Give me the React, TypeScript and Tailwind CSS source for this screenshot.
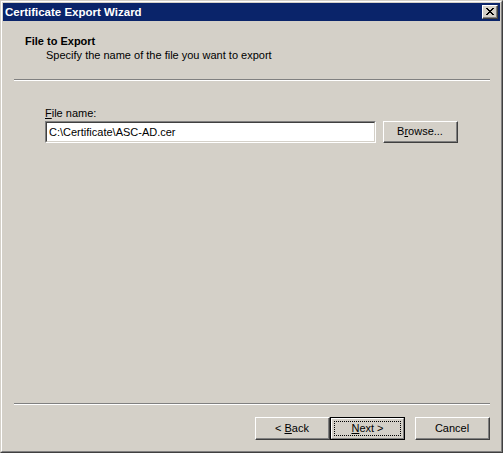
const raised =
  "border border-t-white border-l-white border-r-[#404040] border-b-[#404040]";

const Button = ({
  children,
  isDefault,
}: {
  children: React.ReactNode;
  isDefault?: boolean;
}) => {
  if (isDefault) {
    return (
      <div className="h-[23px] w-[75px] border border-black">
        <div className="h-full w-full border border-t-white border-l-white border-r-[#808080] border-b-[#808080] p-[2px]">
          <div className="flex h-full w-full items-center justify-center border border-dotted border-black pb-[1px]">
            {children}
          </div>
        </div>
      </div>
    );
  }
  return (
    <div className={`h-[23px] w-[75px] ${raised}`}>
      <div className="flex h-full w-full items-center justify-center border-r border-b border-r-[#808080] border-b-[#808080] pb-[1px]">
        {children}
      </div>
    </div>
  );
};

const Separator = () => (
  <div className="ml-[11px] mr-[10px] border-t border-b border-t-[#808080] border-b-white" />
);

// 8x7 pixel close glyph, same as the classic caption button
const closeRows = ["XX....XX", ".XX..XX.", "..XXXX..", "...XX...", "..XXXX..", ".XX..XX.", "XX....XX"];

export default function App() {
  return (
    <div
      className="h-[453px] w-[503px] bg-[#d4d0c8] text-[11px] leading-[14px] text-black"
      style={{ fontFamily: '"Liberation Sans", Arial, sans-serif' }}
    >
      {/* window frame */}
      <div className="h-full w-full border border-t-[#d4d0c8] border-l-[#d4d0c8] border-r-[#404040] border-b-[#404040]">
        <div className="flex h-full w-full flex-col border border-t-white border-l-white border-r-[#808080] border-b-[#808080] p-[1px]">
          {/* title bar */}
          <div className="flex h-[18px] items-center justify-between bg-[#0a246a] pl-[2px] pr-[2px]">
            <span className="text-[11.5px] font-bold text-white">Certificate Export Wizard</span>
            <div className={`h-[14px] w-[16px] bg-[#d4d0c8] ${raised}`}>
              <div className="flex h-full w-full items-center justify-center border-r border-b border-r-[#808080] border-b-[#808080]">
                <svg width="8" height="7" viewBox="0 0 8 7" shapeRendering="crispEdges">
                  {closeRows.map((row, y) =>
                    row.split("").map((c, x) =>
                      c === "X" ? <rect key={`${x}-${y}`} x={x} y={y} width="1" height="1" fill="black" /> : null
                    )
                  )}
                </svg>
              </div>
            </div>
          </div>

          {/* content */}
          <div className="flex flex-1 flex-col">
            <div className="pt-[13px]">
              <div className="pl-[22px] font-bold">File to Export</div>
              <div className="pl-[43px]">
                Specify the name of the file you want to export
              </div>
            </div>
            <div className="mt-[17px]">
              <Separator />
            </div>

            <div className="pl-[42px] pt-[25px]">
              <div>
                <span className="underline">F</span>ile name:
              </div>
              <div className="mt-[1px] flex items-center gap-[7px]">
                <div className="h-[22px] w-[331px] border border-t-[#808080] border-l-[#808080] border-r-white border-b-white">
                  <div className="flex h-full w-full items-center border border-t-[#404040] border-l-[#404040] border-r-[#d4d0c8] border-b-[#d4d0c8] bg-white pl-[2px]">
                    C:\Certificate\ASC-AD.cer
                  </div>
                </div>
                <div className={`h-[22px] w-[75px] ${raised}`}>
                  <div className="flex h-full w-full items-center justify-center border-r border-b border-r-[#808080] border-b-[#808080] pb-[1px]">
                    B<span className="underline">r</span>owse...
                  </div>
                </div>
              </div>
            </div>

            <div className="flex-1" />
            <Separator />
            <div className="mt-[12px] mb-[10px] flex justify-end pr-[10px]">
              <Button>
                &lt; <span className="ml-[3px] underline">B</span>ack
              </Button>
              <Button isDefault>
                <span className="underline">N</span>ext &gt;
              </Button>
              <div className="ml-[10px]">
                <Button>Cancel</Button>
              </div>
            </div>
          </div>
        </div>
      </div>
    </div>
  );
}
